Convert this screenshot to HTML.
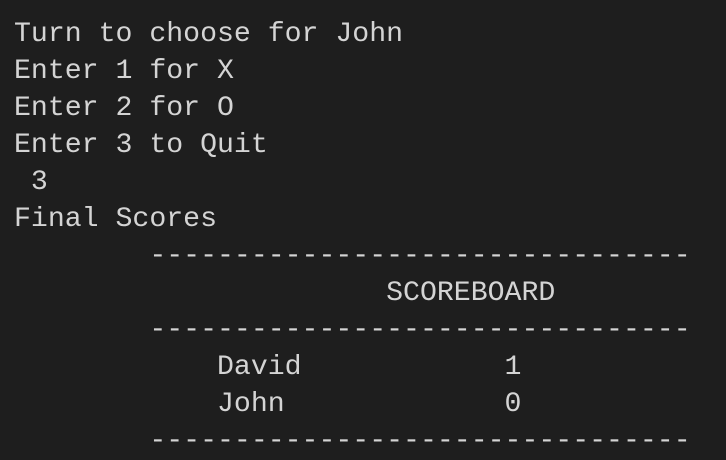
<!DOCTYPE html>
<html><head><meta charset="utf-8"><style>
html,body{margin:0;padding:0;background:#1e1e1e;width:726px;height:460px;overflow:hidden}
pre{margin:0;position:absolute;left:14px;top:16px;font-family:"Liberation Mono","DejaVu Sans Mono",monospace;font-size:28.2px;line-height:37px;color:#d4d4d4;white-space:pre}
</style></head><body>
<pre>Turn to choose for John
Enter 1 for X
Enter 2 for O
Enter 3 to Quit
 3
Final Scores
        --------------------------------
                      SCOREBOARD
        --------------------------------
            David            1
            John             0
        --------------------------------</pre>
</body></html>
